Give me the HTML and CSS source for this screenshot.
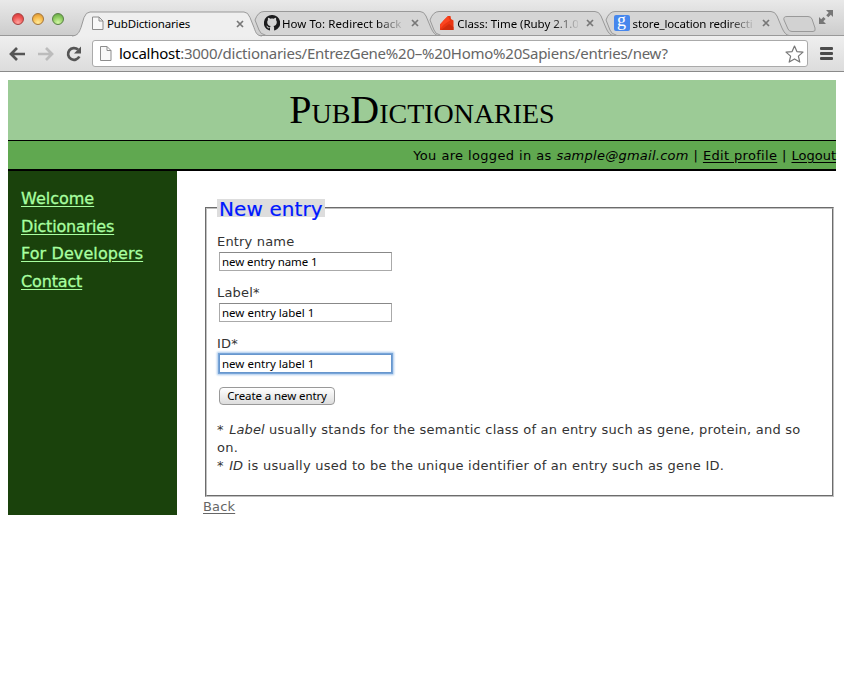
FILE: index.html
```html
<!DOCTYPE html>
<html lang="en">
<head>
<meta charset="utf-8">
<title>PubDictionaries</title>
<link rel="stylesheet" href="styles.css">
</head>
<body>
<div class="chrome">
  <div class="tabstrip">
    <div class="lights"><i class="red"></i><i class="amber"></i><i class="green"></i></div>
    <div class="tab active">
      <svg class="shape" width="190" height="25" viewBox="0 0 190 25"><path d="M0 24.5C6 24 7 21 9 16L12 6Q14 .5 18 .5H172Q176 .5 178 6L182 16C184 22 185 24 190 24.5" /></svg>
      <svg class="fav" width="12" height="15" viewBox="0 0 12 15"><path d="M.5 1h6.500l4 4v8.500H.5zM7 1v4h4" fill="#f8f8f8" stroke="#8c8c8c"/></svg>
      <span class="title t1">PubDictionaries</span>
      <svg class="close" width="8" height="8" viewBox="0 0 8 8"><path d="M1 1l6 6M7 1L1 7"/></svg>
    </div>
    <div class="tab b">
      <svg class="shape" width="184" height="25" viewBox="0 0 184 25"><path d="M10 23.500Q7 23.500 5 19L1 9Q4 .5 10 .5H166Q170 .5 172 5L177 17Q180 24 184 24.500H12z"/></svg>
      <svg class="fav" width="16" height="16" viewBox="0 0 16 16"><path fill="#1b1b1d" d="M8 0a8 8 0 0 0-2.600 15.600c.4.1.6-.2.6-.5v-2c-2.200.5-2.700-.8-2.900-1.200-.3-.6-.8-.9-.8-1 .5-.3 1.200.1 1.600.8.500.8 1.300.8 2.200.5.100-.6.300-.9.600-1.100-2-.3-3.500-1.200-3.500-4 0-.9.300-1.600.8-2.200-.2-.5-.3-1.200.1-2.100.8 0 1.500.4 2.200.9 1.100-.3 2.300-.3 3.400 0 .7-.5 1.500-.9 2.200-.9.400 1 .3 1.600.1 2.100.5.600.8 1.300.8 2.200 0 2.700-1.600 3.700-3.300 4 .4.400.6.900.6 1.500v2.500c0 .3.200.6.600.5A8 8 0 0 0 8 0z"/></svg>
      <span class="title fade t2">How To: Redirect back</span>
      <svg class="close" width="8" height="8" viewBox="0 0 8 8"><path d="M1 1l6 6M7 1L1 7"/></svg>
    </div>
    <div class="tab b c">
      <svg class="shape" width="184" height="25" viewBox="0 0 184 25"><path d="M10 23.500Q7 23.500 5 19L1 9Q4 .5 10 .5H166Q170 .5 172 5L177 17Q180 24 184 24.500H12z"/></svg>
      <svg class="fav" width="16" height="16" viewBox="0 0 16 16"><path fill="#e93511" d="M1 9.500L5 5l4-4 2.500 0L12 4l2.500 1.500V15H1z"/><path fill="#fb4520" d="M5 5l4-4 2 4.500-6 4-3.500 4L1 9.500z"/><path fill="#d12c0d" d="M2 15l8-6 4.500 3v3z"/></svg>
      <span class="title fade t3">Class: Time (Ruby 2.1.0</span>
      <svg class="close" width="8" height="8" viewBox="0 0 8 8"><path d="M1 1l6 6M7 1L1 7"/></svg>
    </div>
    <div class="tab b d">
      <svg class="shape" width="184" height="25" viewBox="0 0 184 25"><path d="M10 23.500Q7 23.500 5 19L1 9Q4 .5 10 .5H166Q170 .5 172 5L177 17Q180 24 184 24.500H12z"/></svg>
      <span class="fav google">g</span>
      <span class="title fade t4">store_location redirecti</span>
      <svg class="close" width="8" height="8" viewBox="0 0 8 8"><path d="M1 1l6 6M7 1L1 7"/></svg>
    </div>
    <svg class="newtab" width="34" height="17" viewBox="0 0 34 17"><path d="M4 .5H25Q28 .5 29 3L32 12Q33 15.500 30 15.500H9Q6 15.500 5 13L1 4Q0 .5 4 .5z" fill="#d2d2d2" stroke="#999"/></svg>
    <svg class="expand" width="15" height="15" viewBox="0 0 15 15"><path fill="#777" d="M7 0h7v7l-2.200-2.200-2.500 2.500-2.100-2.100 2.500-2.500zM0 7l2.200 2.200 2.300-2.300L6.600 9 4.300 11.300 7 14H0z"/></svg>
  </div>
  <div class="toolbar">
    <svg class="nav" width="84" height="18" viewBox="0 0 84 18"><g fill="none" stroke-width="2.700"><path stroke="#555" d="M17 9H3M9 3L3 9l6 6"/><path stroke="#bcbcbc" d="M30 9h14M38 3l6 6-6 6"/><path stroke="#555" d="M70 4.600A5.900 5.900 0 1 0 71.300 11.500"/></g><path fill="#555" d="M73 1.500V8.500h-7z"/></svg>
    <div class="omnibox">
      <svg width="12" height="15" viewBox="0 0 12 15"><path d="M.5 .5h6.500l4 4v10H.5zM7 .5v4h4" fill="#f8f8f8" stroke="#8c8c8c"/></svg>
      <span class="url"><b>localhost</b>:3000/dictionaries/EntrezGene%20–%20Homo%20Sapiens/entries/new?</span>
      <svg class="star" width="19" height="18" viewBox="0 0 19 18"><path d="M9.500 1l2.400 5.600 6.100.5-4.600 4 1.400 6-5.300-3.200-5.300 3.200 1.400-6L1 7.100l6.100-.5z" fill="#fff" stroke="#777" stroke-width="1.200" stroke-linejoin="round"/></svg>
    </div>
    <div class="menu"><i></i><i></i><i></i></div>
  </div>
</div>

<div class="page">
  <header><h1>PubDictionaries</h1></header>
  <div class="login"><span>You are logged in as <em>sample@gmail.com</em> | <a href="#">Edit profile</a> | <a class="out" href="#">Logout</a></span></div>
  <div class="columns">
    <nav>
      <a class="n1" href="#">Welcome</a>
      <a class="n2" href="#">Dictionaries</a>
      <a class="n3" href="#">For Developers</a>
      <a class="n4" href="#">Contact</a>
    </nav>
    <main>
      <form class="entry">
        <div class="legend"><span>New entry</span></div>
        <label for="name">Entry name</label>
        <input id="name" value="new entry name 1">
        <label for="label">Label*</label>
        <input id="label" value="new entry label 1">
        <label for="ident">ID*</label>
        <input id="ident" class="focused" value="new entry label 1">
        <button type="button">Create a new entry</button>
        <p><span class="l1">* <em>Label</em> usually stands for the semantic class of an entry such as gene, protein, and so</span><br>on.<br><span class="l3">* <em>ID</em> is usually used to be the unique identifier of an entry such as gene ID.</span></p>
      </form>
      <a class="back" href="#">Back</a>
    </main>
  </div>
</div>
</body>
</html>
```
FILE: styles.css
```css
* { box-sizing: border-box; }
html, body { margin: 0; height: 100%; overflow: hidden; background: #fff; }
body { font-family: "DejaVu Sans", sans-serif; font-size: 13px; color: #333; }
svg { display: block; flex: none; }

.chrome { height: 72px; font-family: "Noto Sans", sans-serif; }
.tabstrip { display: flex; height: 36px; padding-top: 11px; background: linear-gradient(#e9e9e9, #cdcdcd); border-bottom: 1px solid #999; }
.lights { display: flex; gap: 8px; width: 72px; padding: 2px 0 0 12px; flex: none; }
.lights i { width: 12px; height: 12px; border-radius: 50%; border: 1px solid; }
.lights .red { background: radial-gradient(circle at 50% 85%, #ffa5a0, #ee5553 55%, #cf3436); border-color: #a74040; }
.lights .amber { background: radial-gradient(circle at 50% 85%, #ffeb9a, #f6b94a 55%, #d18b2c); border-color: #a3753b; }
.lights .green { background: radial-gradient(circle at 50% 85%, #d4f7a5, #8ccb60 55%, #5e9e3f); border-color: #587f45; }
.tab { position: relative; display: flex; width: 182px; height: 25px; flex: none; padding: 5px 0 0 20px; color: #000; font-size: 11.500px; }
.tab.b { width: 175.300px; padding: 4px 0 0 10px; }
.shape { position: absolute; left: 0; top: 0; }
.shape path { fill: #d5d5d5; stroke: #999; }
.active { z-index: 2; }
.active .shape { height: 26px; }
.active .shape path { fill: #efefef; }
.fav { position: relative; flex: none; }
.google { width: 16px; height: 16px; border-radius: 2px; background: #4787ed; color: #fff; font: 18px/11px "Liberation Serif", serif; text-align: center; }
.tab.d .fav { left: -1px; }
.title { position: relative; line-height: 16px; height: 16px; white-space: nowrap; }
.active .title { margin: 0 0 0 3px; width: 129px; letter-spacing: -.15px; }
.b .title { margin: 1px 0 0 2px; width: 121px; }
.b .t2 { letter-spacing: .05px; }
.b .t3 { letter-spacing: -.05px; }
.b .t4 { letter-spacing: -.15px; }
.fade { -webkit-mask-image: linear-gradient(90deg, #000 78%, transparent 102%); }
.close { position: relative; margin: 4px 0 0 8px; }
.active .close { margin: 4px 0 0 0; }
.close path { stroke: #777; stroke-width: 1.700; }
.newtab { margin: 5px 0 0 3px; }
.expand { margin: -1px 0 0 2px; }
.toolbar { display: flex; align-items: flex-start; height: 36px; padding: 4px 10px 0 8px; background: linear-gradient(#efefef, #dcdcdc); border-bottom: 1px solid #8a8a8a; }
.nav { margin-top: 5px; }
.omnibox { display: flex; align-items: center; width: 716px; height: 27px; padding: 0 3px 0 7px; background: #fff; border: 1px solid #aaa; border-radius: 3px; }
.url { flex: 1; margin: -1px 0 0 7px; font-size: 15px; letter-spacing: -.25px; line-height: 24px; color: #666; white-space: nowrap; }
.url b { font-weight: 400; color: #000; }
.menu { display: flex; flex-direction: column; gap: 2px; margin: 7px 0 0 12px; }
.menu i { width: 13px; height: 3px; background: #4c4c4c; border-radius: 1px; }

.page { margin: 8px 8px 0; }
header { height: 61px; background: #9ccb96; border-bottom: 1px solid #000; }
h1 { margin: 0; text-align: center; color: #000; font: 400 40px/59px "Liberation Serif", serif; font-variant: small-caps; letter-spacing: -.03px; }
.login { height: 30px; background: #60a850; border-bottom: 2px solid #000; color: #000; text-align: right; line-height: 29px; white-space: nowrap; letter-spacing: .3px; word-spacing: .35px; }
.login em { letter-spacing: .25px; }
.login a { color: #000; }
.login .out { letter-spacing: 0; }
.columns { display: flex; height: 344px; }
nav { display: flex; flex-direction: column; align-items: flex-start; width: 169px; padding: 14px 13px; background: #1a420c; }
nav a { color: #a8ffa0; font-size: 16px; line-height: 27.700px; -webkit-text-stroke: .3px #a8ffa0; }
.n2 { letter-spacing: -.17px; }
.n3 { letter-spacing: .1px; }
.n4 { letter-spacing: -.15px; }
a { text-underline-offset: 2px; }
main { flex: 1; padding: 36px 2px 0 26px; }
.entry { display: flex; flex-direction: column; align-items: flex-start; width: 629px; height: 290px; margin-left: 2px; padding: 0 10px; border: 2px groove #c0c0c0; }
.legend { height: 18px; margin-top: -10px; padding: 0 2px; background: #ddd; color: #0018ff; font-size: 20px; line-height: 21px; letter-spacing: .1px; -webkit-text-stroke: .2px #0018ff; }
label { height: 18px; line-height: 18px; margin-top: 16px; letter-spacing: .18px; }
input { width: 173px; height: 19px; margin: 1px 0 0 2px; padding: 0 2px; border: 1px solid #aaa; border-top-color: #888; font: 11.500px "Noto Sans", sans-serif; color: #000; outline: 0; }
input + label { margin-top: 13px; }
#name { letter-spacing: -.1px; }
.focused { border-color: #6796cd; box-shadow: 0 0 0 1px #78a5d8, 0 0 2px 2px #a7c8ec; }
button { width: 116px; height: 18px; margin: 14px 0 0 2px; padding: 0; border: 1px solid #999; border-radius: 4px; background: linear-gradient(#fff, #ddd); font: 11.500px/14px "Noto Sans", sans-serif; letter-spacing: -.1px; color: #000; white-space: nowrap; }
p { margin: 16px 0 0; line-height: 18px; white-space: nowrap; letter-spacing: .24px; }
.l3 { letter-spacing: .26px; }
p em { margin: 0 0 0 1px; letter-spacing: .1px; }
.back { display: block; width: fit-content; color: #666; line-height: 20px; letter-spacing: .15px; }
```
